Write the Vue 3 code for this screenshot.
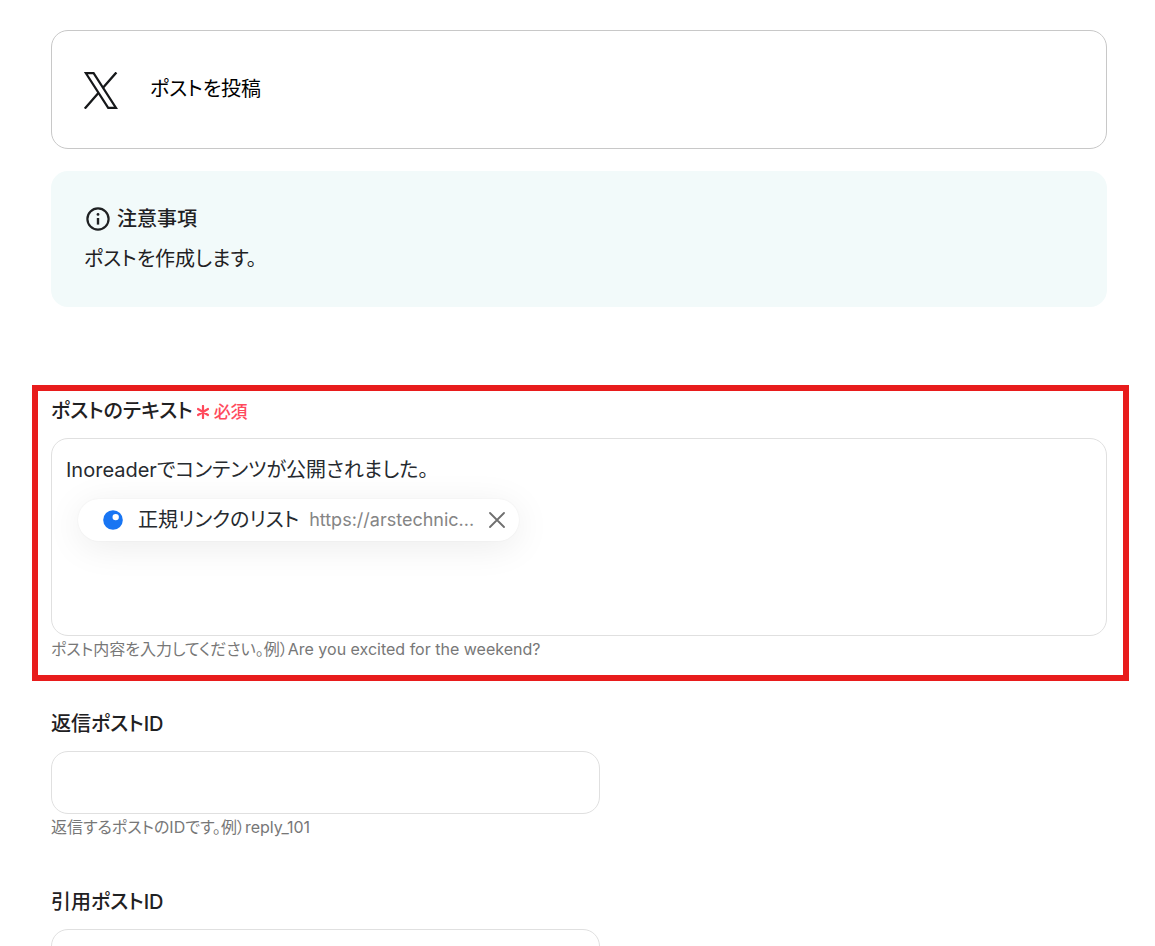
<script setup>
import { ref } from 'vue'

const postText = ref('Inoreaderでコンテンツが公開されました。')
const linked = ref(true)
const fields = ref([
  { id: 'reply-id', label: '返信ポストID', help: '返信するポストのIDです。例）reply_101', value: '' },
  { id: 'quote-id', label: '引用ポストID', help: '', value: '' },
])
</script>

<template>
  <main class="page">
    <header class="action">
      <svg class="x-logo" viewBox="0 0 34 37" aria-label="X" role="img">
        <path d="M1.8 1.1H9.6L32 35.9H24.2Z" fill="none" stroke="#16181a" stroke-width="2.2" />
        <path d="M32.4 .4L19 15.8M14.6 20.8L.8 36.6" fill="none" stroke="#16181a" stroke-width="2.3" />
      </svg>
      <h1>ポストを投稿</h1>
    </header>

    <section class="notice">
      <h2>
        <svg viewBox="0 0 26 26" aria-hidden="true">
          <circle cx="13" cy="13" r="10.6" fill="none" stroke="#1f2123" stroke-width="2.2" />
          <path d="M13 12v6.6" stroke="#1f2123" stroke-width="2.4" />
          <circle cx="13" cy="8.4" r="1.4" fill="#1f2123" />
        </svg>
        注意事項
      </h2>
      <p>ポストを作成します。</p>
    </section>

    <section class="highlight">
      <div class="label-row">
        <label for="post-text">ポストのテキスト</label>
        <span class="required">
          <svg viewBox="0 0 12 14" aria-hidden="true">
            <path d="M6 1v12M1 4l10 6M11 4L1 10" fill="none" stroke="#ff4a5c" stroke-width="2.2" stroke-linecap="round" />
          </svg>
          必須
        </span>
      </div>
      <div class="editor">
        <textarea id="post-text" v-model="postText" rows="1"></textarea>
        <div v-if="linked" class="chip">
          <svg class="source" viewBox="0 0 20 20" aria-hidden="true">
            <circle cx="10" cy="10" r="9.8" fill="#1875f3" />
            <circle cx="12.7" cy="7.1" r="3.2" fill="#fff" />
          </svg>
          <span class="chip-name">正規リンクのリスト</span>
          <span class="chip-value">https://arstechnic...</span>
          <button type="button" aria-label="削除" @click="linked = false">
            <svg viewBox="0 0 16 16" aria-hidden="true">
              <path d="M1 1l14 14M15 1L1 15" stroke="#6f6f6f" stroke-width="1.8" stroke-linecap="round" />
            </svg>
          </button>
        </div>
      </div>
      <p class="help">ポスト内容を入力してください。例）Are you excited for the weekend?</p>
    </section>

    <section v-for="field in fields" :key="field.id" class="field">
      <label :for="field.id">{{ field.label }}</label>
      <input :id="field.id" v-model="field.value" type="text" />
      <p v-if="field.help" class="help">{{ field.help }}</p>
    </section>
  </main>
</template>

<style>
html,
body {
  height: 100%;
  overflow: hidden;
}
#app {
  height: 100%;
  overflow: auto;
  scrollbar-width: none;
}
</style>

<style scoped>
.page {
  box-sizing: border-box;
  padding: 30px 48px 0 51px;
  color: #1f2123;
  font-family: Inter, "Noto Sans CJK JP", sans-serif;
  font-size: 20px;
  line-height: 28px;
  font-feature-settings: "palt";
}
.page * {
  box-sizing: border-box;
}
h1,
h2,
p {
  margin: 0;
}
.action {
  display: flex;
  align-items: center;
  gap: 32px;
  padding: 44px 32px;
  border: 1px solid #c8c8c8;
  border-radius: 17px;
}
.action h1 {
  font-size: 20px;
  font-weight: 400;
  line-height: 29px;
  color: #000;
}
.x-logo {
  width: 34px;
  height: 37px;
  margin: -3px 0 -5px;
}
.notice {
  margin-top: 22px;
  padding: 34px 33px;
  border-radius: 17px;
  background: #f2fafa;
}
.notice h2 {
  display: flex;
  align-items: center;
  gap: 6px;
  margin-bottom: 12px;
  font-size: 20px;
  font-weight: 500;
}
.notice h2 svg {
  width: 26px;
  height: 26px;
  margin-left: 1px;
}
.highlight {
  margin: 78px -22px 0 -19px;
  padding: 5px 16px 13px 13px;
  border: 6px solid #e81c1c;
}
.label-row {
  display: flex;
  align-items: center;
  gap: 4px;
}
label {
  font-weight: 500;
}
.required {
  display: flex;
  align-items: center;
  gap: 5px;
  padding-top: 2px;
  color: #ff4a5c;
  font-size: 17px;
  font-weight: 500;
}
.required svg {
  width: 12px;
  height: 14px;
}
.editor {
  height: 198px;
  margin-top: 12px;
  padding: 17px 14px;
  border: 1px solid #e0e0e0;
  border-radius: 17px;
}
.editor textarea {
  display: block;
  width: 100%;
  height: 28px;
  padding: 0;
  border: 0;
  outline: 0;
  resize: none;
  overflow: hidden;
  background: transparent;
  color: #262a2f;
  font: inherit;
  font-feature-settings: inherit;
}
.chip {
  display: inline-flex;
  align-items: center;
  height: 42px;
  margin: 15px 0 0 12px;
  padding: 0 14px 0 25px;
  border-radius: 21px;
  background: #fff;
  box-shadow: 0 6px 36px rgba(0, 0, 0, 0.08), 0 0 2px rgba(0, 0, 0, 0.06);
  color: #262a2f;
}
.source {
  width: 20px;
  height: 20px;
}
.chip-name {
  margin-left: 15px;
}
.chip-value {
  margin-left: 10px;
  color: #858585;
  font-size: 18px;
}
.chip button {
  display: flex;
  margin-left: 15px;
  padding: 0;
  border: 0;
  background: none;
  cursor: pointer;
}
.chip button svg {
  width: 16px;
  height: 16px;
}
.help {
  margin-top: 1px;
  color: #777;
  font-size: 16px;
  line-height: 25px;
}
.field {
  margin-top: 29px;
}
.field label {
  display: block;
}
.field input {
  display: block;
  width: 52%;
  height: 63px;
  margin-top: 13px;
  padding: 0 16px;
  border: 1px solid #e0e0e0;
  border-radius: 17px;
  background: #fff;
  color: inherit;
  font: inherit;
}
.field + .field {
  margin-top: 48px;
}
</style>
